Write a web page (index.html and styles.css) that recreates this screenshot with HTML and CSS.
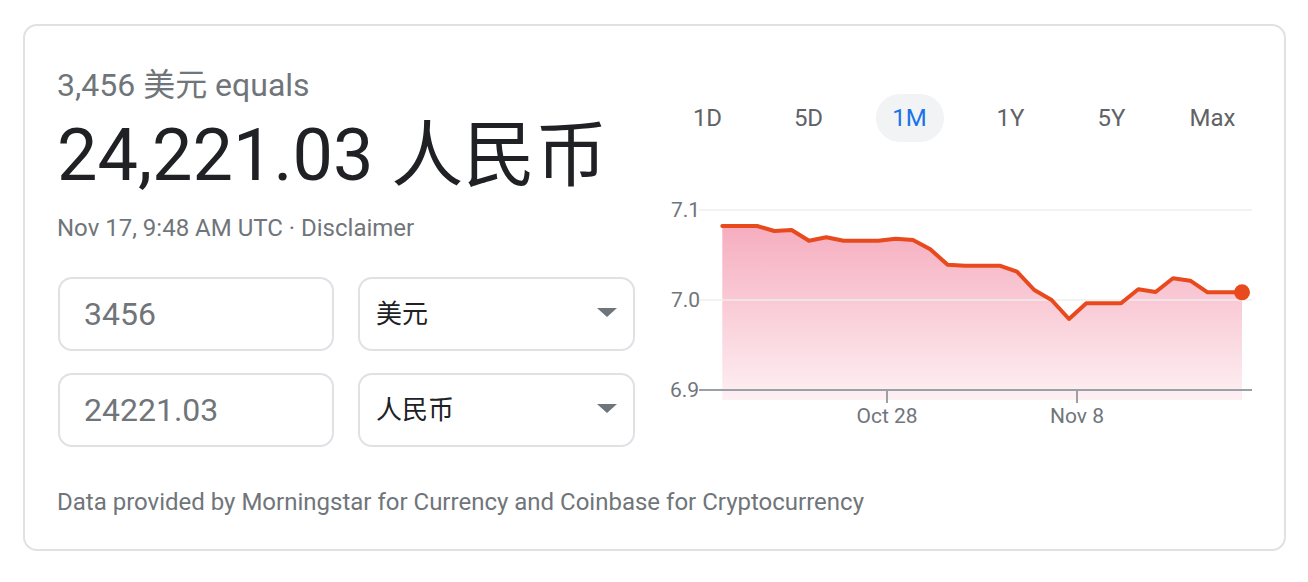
FILE: index.html
```html
<!DOCTYPE html>
<html lang="zh">
<head>
<meta charset="utf-8">
<title>Currency converter</title>
<link rel="stylesheet" href="styles.css">
</head>
<body>
<div class="card">
  <div class="main">
    <div class="left">
      <div class="equals">3,456 美元 equals</div>
      <div class="result">24,221.03 人民币</div>
      <div class="meta">Nov 17, 9:48 AM UTC · Disclaimer</div>
      <div class="rows">
        <div class="row">
          <div class="field input">3456</div>
          <div class="field select"><span class="sel-text">美元</span><span class="arrow"></span></div>
        </div>
        <div class="row">
          <div class="field input">24221.03</div>
          <div class="field select"><span class="sel-text">人民币</span><span class="arrow"></span></div>
        </div>
      </div>
    </div>
    <div class="right">
      <div class="tabs">
        <div class="tab"><span class="pill">1D</span></div>
        <div class="tab"><span class="pill">5D</span></div>
        <div class="tab"><span class="pill active">1M</span></div>
        <div class="tab"><span class="pill">1Y</span></div>
        <div class="tab"><span class="pill">5Y</span></div>
        <div class="tab"><span class="pill">Max</span></div>
      </div>
      <svg class="chart" width="606" height="240" viewBox="657 190 606 240" xmlns="http://www.w3.org/2000/svg">
        <defs>
          <linearGradient id="fillGrad" x1="0" y1="0" x2="0" y2="1">
            <stop offset="0" stop-color="#f6adbf"/>
            <stop offset="1" stop-color="#fdf0f3"/>
          </linearGradient>
        </defs>
        <polygon fill="url(#fillGrad)" points="722.3,226 739.6,226 757,226 774.3,231 791.6,230 809,240.7 826.3,237.3 843.6,240.7 861,240.7 878.3,240.7 895.6,238.7 913,240 930.3,249.3 947.6,264.7 965,265.7 982.3,265.7 999.6,265.7 1017,271.7 1034.3,290 1051.6,300 1069,319 1086.3,303.3 1103.6,303.3 1121,303.3 1138.3,289.3 1155.6,292 1173,278.3 1190.3,280.7 1207.6,292.3 1225,292.3 1242,292.3 1242,400 722.3,400"/>
        <line class="grid" x1="699" y1="210" x2="1252" y2="210"/>
        <line class="grid" x1="699" y1="300" x2="1252" y2="300"/>
        <line class="axis" x1="699" y1="390" x2="1252" y2="390"/>
        <line class="axis" x1="887" y1="390" x2="887" y2="403"/>
        <line class="axis" x1="1077" y1="390" x2="1077" y2="403"/>
        <polyline class="line" points="722.3,226 739.6,226 757,226 774.3,231 791.6,230 809,240.7 826.3,237.3 843.6,240.7 861,240.7 878.3,240.7 895.6,238.7 913,240 930.3,249.3 947.6,264.7 965,265.7 982.3,265.7 999.6,265.7 1017,271.7 1034.3,290 1051.6,300 1069,319 1086.3,303.3 1103.6,303.3 1121,303.3 1138.3,289.3 1155.6,292 1173,278.3 1190.3,280.7 1207.6,292.3 1225,292.3 1242,292.3"/>
        <circle class="dot" cx="1242" cy="292.3" r="8"/>
        <text class="lbl" x="671" y="217">7.1</text>
        <text class="lbl" x="671" y="307">7.0</text>
        <text class="lbl" x="670" y="397">6.9</text>
        <text class="lbl" x="887" y="423" text-anchor="middle">Oct 28</text>
        <text class="lbl" x="1077" y="423" text-anchor="middle">Nov 8</text>
      </svg>
    </div>
  </div>
  <div class="footer">Data provided by Morningstar for Currency and Coinbase for Cryptocurrency</div>
</div>
</body>
</html>
```

FILE: styles.css
```css
html, body {
  margin: 0;
  background: #ffffff;
}

body {
  padding: 24px 22px 0 23px;
  font-family: Roboto, "Noto Sans CJK SC", "Noto Sans", sans-serif;
  color: #202124;
}

.card {
  border: 2px solid #dfe1e5;
  border-radius: 14px;
  padding: 39px 20px 31px 32px;
}

.main {
  display: flex;
  align-items: flex-start;
}

.left {
  width: 578px;
  flex: none;
}

.equals {
  font-size: 32px;
  line-height: 40px;
  color: #70757a;
}

.result {
  margin-top: 7px;
  font-size: 72px;
  line-height: 88px;
  color: #202124;
}

.meta {
  margin-top: 12px;
  font-size: 24px;
  line-height: 32px;
  color: #70757a;
}

.rows {
  margin-top: 33px;
  display: flex;
  flex-direction: column;
  gap: 22px;
}

.row {
  display: flex;
  gap: 24px;
  margin-left: 1px;
}

.field {
  box-sizing: border-box;
  height: 74px;
  border: 2px solid #dfe1e5;
  border-radius: 14px;
  display: flex;
  align-items: center;
}

.input {
  width: 276px;
  padding-left: 24px;
  font-size: 32px;
  line-height: 1;
  color: #70757a;
}

.select {
  width: 277px;
  padding: 0 16px 0 16px;
  justify-content: space-between;
}

.sel-text {
  font-size: 26px;
  line-height: 1;
  color: #202124;
}

.arrow {
  width: 0;
  height: 0;
  border-left: 10px solid transparent;
  border-right: 10px solid transparent;
  border-top: 9px solid #70757a;
  margin-top: -4px;
}

.right {
  margin-left: 22px;
  width: 606px;
  flex: none;
}

.tabs {
  margin-top: 29px;
  display: flex;
}

.tab {
  flex: 1;
  display: flex;
  justify-content: center;
}

.pill {
  width: 68px;
  height: 48px;
  border-radius: 24px;
  display: flex;
  align-items: center;
  justify-content: center;
  font-size: 24px;
  color: #5f6368;
}

.pill.active {
  background: #f1f3f4;
  color: #1a73e8;
}

.chart {
  display: block;
  margin-top: 48px;
}

.grid {
  stroke: #eeeeee;
  stroke-width: 2;
  stroke-opacity: 0.7;
}

.axis {
  stroke: #9aa0a6;
  stroke-width: 2;
}

.line {
  fill: none;
  stroke: #e8491d;
  stroke-width: 4;
  stroke-linejoin: round;
  stroke-linecap: round;
}

.dot {
  fill: #e8491d;
}

.lbl {
  font-family: Roboto, "Noto Sans", sans-serif;
  font-size: 21px;
  fill: #70757a;
}

.footer {
  margin-top: 39px;
  font-size: 24px;
  line-height: 32px;
  color: #70757a;
}
```
